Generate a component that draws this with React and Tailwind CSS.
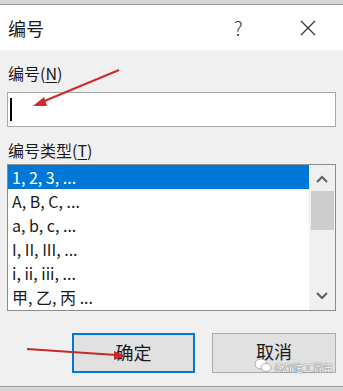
import React from "react";

const font = { fontFamily: '"Noto Sans CJK SC", "Microsoft YaHei", sans-serif' };

function Chevron({ up }) {
  return (
    <svg width="12" height="8" viewBox="0 0 12 8">
      <path
        d={up ? "M1 7 L6 2 L11 7" : "M1 1 L6 6 L11 1"}
        fill="none"
        stroke="#606060"
        strokeWidth="2"
      />
    </svg>
  );
}

export default function App() {
  const items = ["1, 2, 3, ...", "A, B, C, ...", "a, b, c, ...", "I, II, III, ...", "i, ii, iii, ...", "甲, 乙, 丙 ..."];
  return (
    <div className="relative w-[343px] h-[391px] overflow-hidden bg-[#f0f0f0] flex flex-col text-[#1a1a1a]" style={font}>
      <div className="h-[5px] bg-[#d6d6d6] border-b border-[#9a9a9a]" />
      <div className="h-[45px] bg-white flex items-center pl-[8px]">
        <span className="text-[18px] leading-none">编号</span>
        <span className="ml-[190px] text-[19px] leading-none text-[#333] font-light">?</span>
        <svg className="ml-[57px]" width="16" height="16" viewBox="0 0 16 16">
          <path d="M1 1 L15 15 M15 1 L1 15" stroke="#333" strokeWidth="1.2" />
        </svg>
      </div>
      <div className="flex flex-col px-[7px] pt-[10px]">
        <div className="h-[26px] leading-[26px] text-[16px] pl-[1px]">
          编号(<span className="underline underline-offset-2">N</span>)
        </div>
        <div className="mt-[6px] h-[35px] bg-white border border-[#a8a8a8] flex items-center pl-[2px]">
          <div className="w-[2px] h-[23px] bg-black" />
        </div>
        <div className="mt-[10px] h-[26px] leading-[26px] text-[16px] pl-[1px]">
          编号类型(<span className="underline underline-offset-2">T</span>)
        </div>
        <div className="mt-[1px] h-[147px] bg-white border border-[#8c8c8c] flex">
          <div className="w-[301px] flex flex-col">
            {items.map((t, i) => (
              <div
                key={t}
                className={
                  "h-[24px] flex items-center pl-[4px] text-[16px] leading-none whitespace-nowrap " +
                  (i === 0 ? "bg-[#0078d7] text-white" : "")
                }
              >
                {t}
              </div>
            ))}
          </div>
          <div className="flex-1 bg-[#f0f0f0] flex flex-col items-center">
            <div className="h-[26px] flex items-center justify-center pt-[2px]">
              <Chevron up />
            </div>
            <div className="w-[23px] h-[39px] bg-[#cdcdcd]" />
            <div className="flex-1" />
            <div className="h-[24px] flex items-center justify-center pb-[4px]">
              <Chevron />
            </div>
          </div>
        </div>
        <div className="mt-[22px] flex justify-end gap-[17px]">
          <div className="w-[123px] h-[40px] bg-[#e1e1e1] border-2 border-[#0078d7] flex items-center justify-center text-[18px] pb-[2px]">
            确定
          </div>
          <div className="w-[124px] h-[40px] bg-[#e1e1e1] border border-[#adadad] flex items-center justify-center text-[18px] pb-[4px]">
            取消
          </div>
        </div>
      </div>
      <div className="mt-auto h-[5px] bg-[#d6d6d6] border-t border-[#9a9a9a]" />

      <svg className="absolute left-0 top-0 pointer-events-none" width="343" height="391" viewBox="0 0 343 391">
        <line x1="119" y1="70" x2="42" y2="102" stroke="#d12a2a" strokeWidth="2" />
        <polygon points="33,106 44,97 47,106" fill="#d12a2a" />
        <line x1="27" y1="349" x2="116" y2="355" stroke="#c42a2a" strokeWidth="2" />
        <polygon points="126,356 114,351 114,360" fill="#c42a2a" />
      </svg>

      <div className="absolute left-[254px] top-[358px] flex items-center gap-[3px]">
        <svg width="18" height="15" viewBox="0 0 18 15">
          <ellipse cx="7" cy="6" rx="6" ry="5" fill="#fff" stroke="#9a9a9a" strokeWidth="0.8" />
          <ellipse cx="12" cy="9.5" rx="5" ry="4" fill="#fff" stroke="#9a9a9a" strokeWidth="0.8" />
        </svg>
        <span className="text-[10px] leading-none text-white mt-[5px] [text-shadow:0_0_1px_#555,0_0_1px_#555]">GZY信工青年</span>
      </div>
    </div>
  );
}
